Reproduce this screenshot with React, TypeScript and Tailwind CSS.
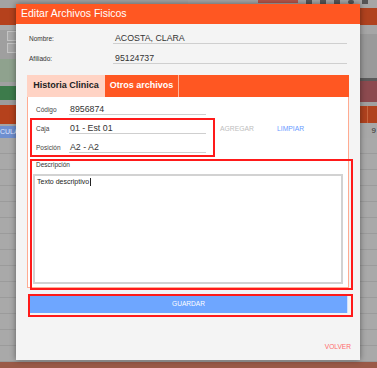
import React from "react";

const font = { fontFamily: '"Liberation Sans", Arial, sans-serif' };

function GrayRows() {
  return (
    <div className="flex-1 flex flex-col bg-[#a9a9a9]">
      {Array.from({ length: 14 }).map((_, i) => (
        <div key={i} className="h-[16px] shrink-0 border-b border-[#9b9b9b]" />
      ))}
    </div>
  );
}

function LeftBg() {
  return (
    <div className="flex flex-col w-[188px] h-full">
      <div className="h-[9px] bg-[#a3a3a3]" />
      <div className="h-[18px] bg-[#b5411c]" />
      <div className="h-[5px] bg-[#ababab]" />
      <div className="h-[31px] bg-[#9f9f9f] flex flex-col gap-[2px] pt-[1px] pl-[7px]">
        <div className="w-[14px] h-[10px] border border-[#c4c4c4] bg-[#a8a8a8]" />
        <div className="w-[14px] h-[10px] border border-[#c4c4c4] bg-[#a8a8a8]" />
      </div>
      <div className="h-[25px] bg-[#8fa28e]" />
      <div className="h-[4px] bg-[#a0a0a0]" />
      <div className="h-[15px] bg-[#3d7b4b]" />
      <div className="h-[5px] bg-[#9c9c9c]" />
      <div className="h-[20px] bg-[#b5411c]" />
      <div className="h-[3px] bg-[#a4a4a4]" />
      <div className="h-[12px] bg-[#a4a4a4] flex">
        <div className="w-[18px] bg-[#6f8fcf] text-[7px] leading-[12px] text-[#dfe8ff] overflow-hidden whitespace-nowrap" style={font}>
          CULAR
        </div>
      </div>
      <GrayRows />
      <div className="h-[6px] bg-[#9a5a48]" />
    </div>
  );
}

function RightBg() {
  return (
    <div className="flex flex-col flex-1 h-full">
      <div className="h-[9px] bg-[#a6a6a6] flex items-start justify-start pl-[70px] gap-[8px]">
        <div className="w-[40px] h-[3px] bg-[#b5554a]" />
        <div className="w-[6px] h-[4px] bg-[#555]" />
        <div className="w-[6px] h-[4px] bg-[#555]" />
        <div className="w-[6px] h-[4px] bg-[#555]" />
        <div className="w-[6px] h-[4px] rounded-full bg-[#555]" />
        <div className="w-[6px] h-[4px] bg-[#555]" />
      </div>
      <div className="h-[18px] bg-[#b0421e]" />
      <div className="h-[10px] bg-[#a6a6a6]" />
      <div className="h-[48px] bg-[#9a9a9a]" />
      <div className="h-[3px] bg-[#5a5a5a]" />
      <div className="h-[22px] bg-[#8c4a4f]" />
      <div className="h-[5px] bg-[#a0a0a0]" />
      <div className="h-[18px] bg-[#b0421e] flex justify-end pr-[9px]">
        <div className="w-px h-full bg-[#c7653f]" />
      </div>
      <div className="h-[17px] bg-[#a8a8a8] flex items-center justify-end pr-[1px] text-[8px] text-[#333]" style={font}>
        9
      </div>
      <GrayRows />
      <div className="h-[6px] bg-[#9a5a48]" />
    </div>
  );
}

function FieldRow({ label, value, first }: { label: string; value: string; first?: boolean }) {
  return (
    <div className={`flex items-end ${first ? "h-[18px]" : "h-[19px]"}`}>
      <div className="w-[33px] text-[6.5px] leading-[10px] text-[#444]">{label}</div>
      <div className="w-[137px] h-full flex items-end border-b border-[#cfcfcf] pl-[1px] text-[8.8px] leading-[10px] text-[#333]">
        {value}
      </div>
    </div>
  );
}

export default function App() {
  return (
    <div className="relative w-[377px] h-[368px] overflow-hidden bg-[#a6a6a6]" style={font}>
      <div className="absolute inset-0 flex">
        <LeftBg />
        <RightBg />
      </div>

      {/* Modal */}
      <div className="absolute left-[16px] top-[4px] w-[344px] h-[356px] bg-[#f4f4f4] flex flex-col shadow-[0_0_6px_rgba(0,0,0,0.45)]">
        <div className="h-[20px] bg-[#ff5722] flex items-center pl-[5px] text-white text-[10.5px]">
          Editar Archivos Fisicos
        </div>

        <div className="flex flex-col pt-[3px]">
          <div className="flex items-end h-[17px]">
            <div className="w-[97px] pl-[13px] text-[6.5px] leading-[10px] text-[#333]">Nombre:</div>
            <div className="w-[234px] h-full flex items-end border-b border-[#cfcfcf] pl-[2px] text-[8.8px] leading-[10px] text-[#333]">
              ACOSTA, CLARA
            </div>
          </div>
          <div className="flex items-end h-[17px] mt-[3px]">
            <div className="w-[97px] pl-[13px] text-[6.5px] leading-[10px] text-[#333]">Afiliado:</div>
            <div className="w-[234px] h-full flex items-end border-b border-[#cfcfcf] pl-[2px] text-[8.8px] leading-[10px] text-[#333]">
              95124737
            </div>
          </div>
        </div>

        {/* Tabs */}
        <div className="ml-[11px] w-[322px] mt-[11px] flex flex-col">
          <div className="h-[22px] bg-[#ff5722] flex">
            <div className="w-[78px] bg-[#ffd3c4] flex items-center justify-center text-[9px] font-bold text-[#222]">
              Historia Clinica
            </div>
            <div className="w-[73px] flex items-center justify-center text-[9px] font-bold text-white">
              Otros archivos
            </div>
            <div className="w-px bg-[#ffb49a]" />
            <div className="flex-1" />
          </div>
          <div className="bg-white border-x border-b border-[#ffab91] flex flex-col pb-[3px]">
            <div className="pl-[8px]">
              <FieldRow label="Código" value="8956874" first />
            </div>
            <div className="flex pl-[8px]">
              <div className="flex flex-col">
                <FieldRow label="Caja" value="01 - Est 01" />
                <FieldRow label="Posición" value="A2 - A2" />
              </div>
              <div className="flex items-start pt-[10px] pl-[14px] gap-[23px] text-[6.8px] leading-[8px]">
                <span className="text-[#bdbdbd]">AGREGAR</span>
                <span className="text-[#6a9cff]">LIMPIAR</span>
              </div>
            </div>
            <div className="pl-[8px] mt-[8px] text-[6.5px] leading-[8px] text-[#333]">Descripción</div>
            <div className="px-[5px] mt-[5px]">
              <div className="h-[110px] border-2 border-[#d2d2d2] bg-white px-[2px] pt-[1px]">
                <div className="flex items-center text-[7px] leading-[10px] text-[#222]">
                  Texto descriptivo
                  <span className="inline-block w-px h-[8px] bg-[#222] ml-[0.5px]" />
                </div>
              </div>
            </div>
          </div>
        </div>

        <div className="ml-[14px] mt-[7px] w-[318px] h-[18px] bg-[#6ea6ff] border-r border-[#cfe0ff] flex items-center justify-center text-[6.6px] text-white">
          GUARDAR
        </div>

        <div className="mt-auto flex justify-end pr-[9px] pb-[9px] text-[6.6px] leading-[8px] text-[#ff6b6b]">
          VOLVER
        </div>
      </div>

      {/* Annotation outlines */}
      <div className="absolute left-[30px] top-[118px] w-[185px] h-[39px] border-2 border-[#ff1a1a] pointer-events-none" />
      <div className="absolute left-[30px] top-[159px] w-[323px] h-[131px] border-2 border-[#ff1a1a] pointer-events-none" />
      <div className="absolute left-[28px] top-[294px] w-[325px] h-[23px] border-2 border-[#ff1a1a] pointer-events-none" />
    </div>
  );
}
